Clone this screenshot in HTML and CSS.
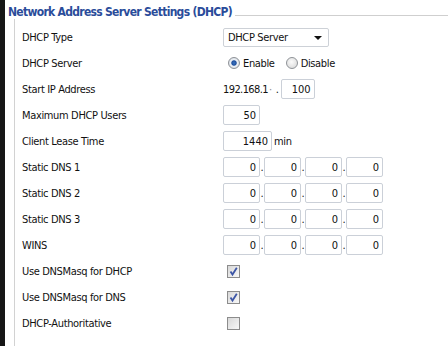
FILE: index.html
```html
<!DOCTYPE html>
<html lang="en">
<head>
    <meta charset="UTF-8">
    <title>DHCP Settings</title>
    <link rel="stylesheet" href="styles.css">
</head>
<body>
    <div class="side"></div>
    <div class="main">
        <div class="legend">
            <span class="legend-title">Network Address Server Settings (DHCP)</span>
            <span class="legend-rule"></span>
        </div>
        <div class="section">
            <div class="row">
                <span class="label">DHCP Type</span>
                <div class="select">DHCP Server<span class="arrow"></span></div>
            </div>
            <div class="row">
                <span class="label">DHCP Server</span>
                <span class="radio checked"></span><span class="opt">Enable</span>
                <span class="radio"></span><span class="opt">Disable</span>
            </div>
            <div class="row">
                <span class="label">Start IP Address</span>
                <div class="ip">
                    <span class="prefix">192.168.1</span><span class="mid">&middot;</span><span class="sep">.</span>
                    <input class="num w34" type="text" value="100">
                </div>
            </div>
            <div class="row">
                <span class="label">Maximum DHCP Users</span>
                <input class="num" type="text" value="50">
            </div>
            <div class="row">
                <span class="label">Client Lease Time</span>
                <div class="ip">
                    <input class="num w49" type="text" value="1440"><span class="unit">min</span>
                </div>
            </div>
            <div class="row">
                <span class="label">Static DNS 1</span>
                <div class="ip">
                    <input class="num" type="text" value="0"><span class="dot">.</span><input class="num" type="text" value="0"><span class="dot">.</span><input class="num" type="text" value="0"><span class="dot">.</span><input class="num" type="text" value="0">
                </div>
            </div>
            <div class="row">
                <span class="label">Static DNS 2</span>
                <div class="ip">
                    <input class="num" type="text" value="0"><span class="dot">.</span><input class="num" type="text" value="0"><span class="dot">.</span><input class="num" type="text" value="0"><span class="dot">.</span><input class="num" type="text" value="0">
                </div>
            </div>
            <div class="row">
                <span class="label">Static DNS 3</span>
                <div class="ip">
                    <input class="num" type="text" value="0"><span class="dot">.</span><input class="num" type="text" value="0"><span class="dot">.</span><input class="num" type="text" value="0"><span class="dot">.</span><input class="num" type="text" value="0">
                </div>
            </div>
            <div class="row">
                <span class="label">WINS</span>
                <div class="ip">
                    <input class="num" type="text" value="0"><span class="dot">.</span><input class="num" type="text" value="0"><span class="dot">.</span><input class="num" type="text" value="0"><span class="dot">.</span><input class="num" type="text" value="0">
                </div>
            </div>
            <div class="row">
                <span class="label">Use DNSMasq for DHCP</span>
                <span class="check">
                    <svg width="11" height="11" viewBox="0 0 11 11"><path d="M2.5 5.5 L4.5 8.5 L8.8 1.8" fill="none" stroke="#3d56a6" stroke-width="1.8"/></svg>
                </span>
            </div>
            <div class="row">
                <span class="label">Use DNSMasq for DNS</span>
                <span class="check">
                    <svg width="11" height="11" viewBox="0 0 11 11"><path d="M2.5 5.5 L4.5 8.5 L8.8 1.8" fill="none" stroke="#3d56a6" stroke-width="1.8"/></svg>
                </span>
            </div>
            <div class="row">
                <span class="label">DHCP-Authoritative</span>
                <span class="check"></span>
            </div>
        </div>
    </div>
</body>
</html>
```

FILE: styles.css
```css
body {
    margin: 0;
    height: 100vh;
    display: flex;
    background: #fff;
    color: #111;
    font-family: "DejaVu Sans Condensed", "DejaVu Sans", sans-serif;
    font-size: 11px;
    letter-spacing: -0.35px;
    overflow: hidden;
}
.side {
    width: 5px;
    background: #161616;
}
.main {
    flex: 1;
    display: flex;
    flex-direction: column;
}
.legend {
    display: flex;
    align-items: flex-start;
    height: 19px;
    padding-left: 3px;
}
.legend-title {
    padding-top: 4px;
    line-height: 16px;
    font-size: 12px;
    font-weight: bold;
    letter-spacing: -0.7px;
    color: #2a4c9a;
}
.legend-rule {
    flex: 1;
    margin-top: 15px;
    margin-left: 3px;
    border-top: 1px solid #cfcfcf;
}
.section {
    flex: 1;
    margin-left: 9px;
    border-left: 1px solid #d2d2d2;
    padding-top: 5px;
    padding-left: 7px;
}
.row {
    display: flex;
    align-items: center;
    height: 26px;
}
.label {
    width: 201px;
}
.select {
    position: relative;
    box-sizing: border-box;
    width: 106px;
    height: 19px;
    line-height: 17px;
    padding-left: 4px;
    border: 1px solid #cdd1d7;
    border-radius: 2px;
}
.arrow {
    position: absolute;
    right: 6px;
    top: 7px;
    border-left: 4px solid transparent;
    border-right: 4px solid transparent;
    border-top: 4px solid #111;
}
.radio {
    box-sizing: border-box;
    width: 12px;
    height: 12px;
    margin-left: 5px;
    border: 1px solid #8e9297;
    border-radius: 50%;
    background: radial-gradient(circle at 45% 40%, #fbfbfb 0%, #d4d4d4 100%);
}
.radio.checked {
    background: radial-gradient(circle at 50% 50%, #3a74c0 0%, #1f4f9e 32%, #eef2f7 45%, #c8ced6 100%);
}
.opt {
    margin-left: 3px;
    margin-right: 6px;
}
.ip {
    display: flex;
    align-items: baseline;
}
.prefix {
    letter-spacing: -0.6px;
}
.mid {
    color: #888;
    margin-left: 1px;
}
.sep {
    margin-left: 4px;
    margin-right: 2px;
}
.num {
    box-sizing: border-box;
    width: 37px;
    height: 20px;
    margin: 0;
    padding: 0 3px 0 0;
    border: 1px solid #cbd0d8;
    border-radius: 2px;
    text-align: right;
    font-family: "DejaVu Sans Condensed", "DejaVu Sans", sans-serif;
    font-size: 11px;
    color: #111;
    background: #fff;
}
.w34 {
    width: 34px;
}
.w49 {
    width: 49px;
}
.unit {
    margin-left: 2px;
}
.dot {
    width: 4px;
    text-align: center;
}
.check {
    box-sizing: border-box;
    width: 13px;
    height: 13px;
    margin-left: 4px;
    border: 1px solid #8c8c8c;
    background: linear-gradient(135deg, #d8d8d8, #f8f8f8);
    display: flex;
    align-items: center;
    justify-content: center;
}
```
